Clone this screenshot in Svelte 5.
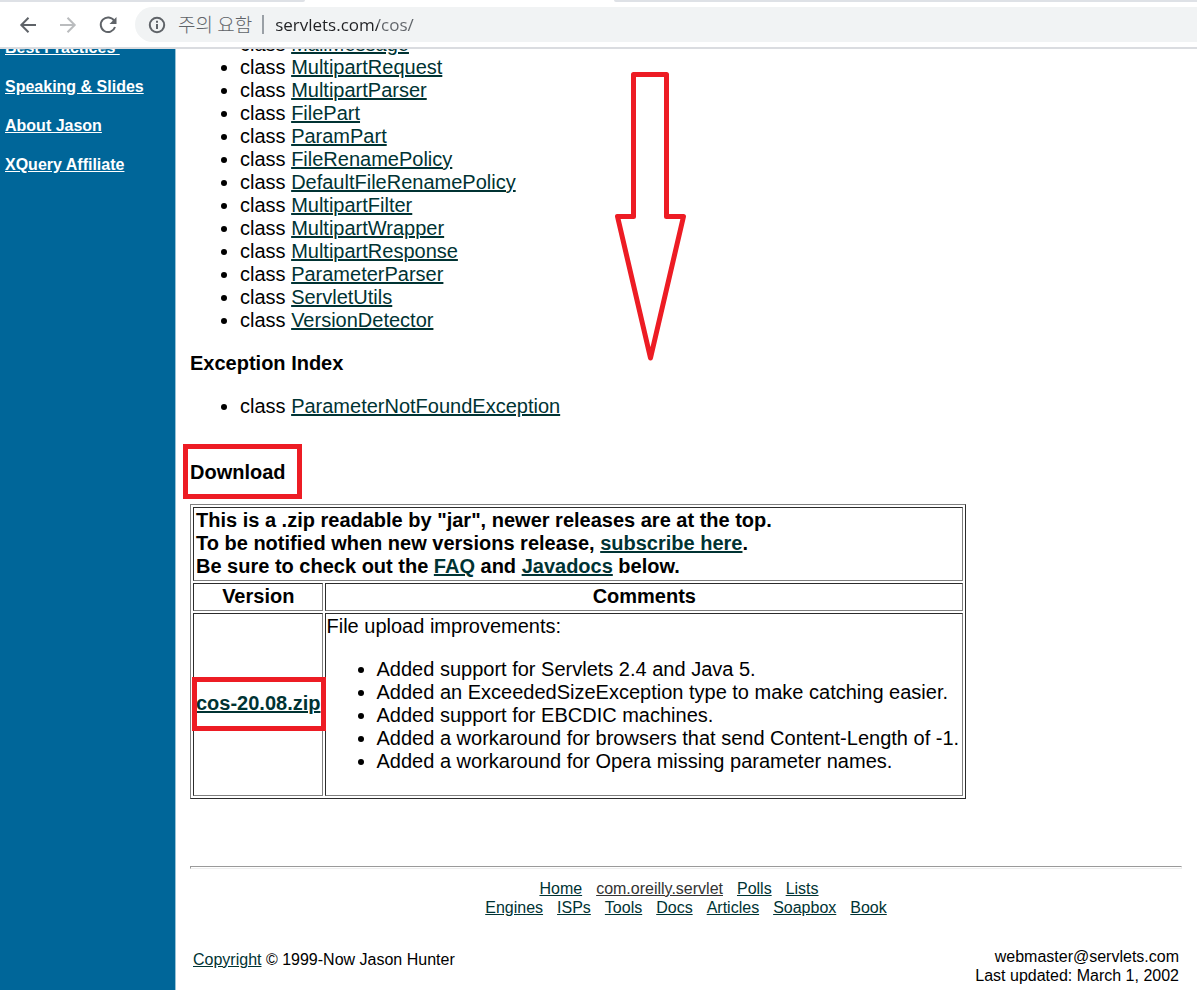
<script>
  const classes = [
    'MailMessage', 'MultipartRequest', 'MultipartParser', 'FilePart', 'ParamPart',
    'FileRenamePolicy', 'DefaultFileRenamePolicy', 'MultipartFilter', 'MultipartWrapper',
    'MultipartResponse', 'ParameterParser', 'ServletUtils', 'VersionDetector'
  ];
  const sections = ['Best Practices\u00a0', 'Speaking & Slides', 'About Jason', 'XQuery Affiliate'];
  const improvements = [
    'Added support for Servlets 2.4 and Java 5.',
    'Added an ExceededSizeException type to make catching easier.',
    'Added support for EBCDIC machines.',
    'Added a workaround for browsers that send Content-Length of -1.',
    'Added a workaround for Opera missing parameter names.'
  ];
  const footerRows = [
    ['Home', 'com.oreilly.servlet', 'Polls', 'Lists'],
    ['Engines', 'ISPs', 'Tools', 'Docs', 'Articles', 'Soapbox', 'Book']
  ];
  let address = $state('servlets.com/cos/');
</script>

<div class="window">
  <header>
    <div class="tabs"><span class="tab before"></span><span class="tab active"></span><span class="tab after"></span></div>
    <div class="toolbar">
      <button aria-label="Back">
        <svg width="18" height="18" viewBox="0 0 18 18"><path d="M17 9H2.500M9.500 1.800L2.300 9l7.200 7.200" /></svg>
      </button>
      <button aria-label="Forward" disabled>
        <svg width="18" height="18" viewBox="0 0 18 18"><path d="M1 9h14.500M8.500 1.800L15.700 9l-7.200 7.200" /></svg>
      </button>
      <button aria-label="Reload">
        <svg width="18" height="18" viewBox="0 0 18 18"><path d="M15.200 4.800A7.300 7.300 0 1 0 16 11" /><path class="solid" d="M17.500 1v7h-7z" /></svg>
      </button>
      <div class="omnibox">
        <svg width="18" height="18" viewBox="0 0 18 18"><circle cx="9" cy="9" r="7.200" /><path d="M9 8v5M9 4.800v2" /></svg>
        <label for="address">주의 요함</label>
        <span class="divider"></span>
        <input id="address" type="text" spellcheck="false" bind:value={address} />
      </div>
    </div>
  </header>

  <div class="page">
    <nav class="side">
      {#each sections as name}
        <a href="#top">{name}</a>
      {/each}
    </nav>

    <main>
      <ul class="index">
        {#each classes as name}
          <li>class <a href="#top">{name}</a></li>
        {/each}
      </ul>

      <h3>Exception Index</h3>
      <ul>
        <li>class <a href="#top">ParameterNotFoundException</a></li>
      </ul>

      <h3 class="download"><span class="marked">Download</span></h3>

      <table>
        <tbody>
          <tr>
            <th colspan="2" class="intro">
              This is a .zip readable by "jar", newer releases are at the top.<br />
              To be notified when new versions release, <a href="#top">subscribe here</a>.<br />
              Be sure to check out the <a href="#top">FAQ</a> and <a href="#top">Javadocs</a> below.
            </th>
          </tr>
          <tr><th>Version</th><th>Comments</th></tr>
          <tr>
            <th class="file"><span class="marked zip"><a href="#top">cos-20.08.zip</a></span></th>
            <td>
              File upload improvements:
              <ul>
                {#each improvements as text}
                  <li>{text}</li>
                {/each}
              </ul>
            </td>
          </tr>
        </tbody>
      </table>

      <footer>
        <hr />
        <nav class="links">
          {#each footerRows as row}
            <div>
              {#each row as name}<a href="#top" class:visited={name === 'com.oreilly.servlet'}>{name}</a>{/each}
            </div>
          {/each}
        </nav>
        <div class="legal">
          <p class="copyright"><a href="#top">Copyright</a> © 1999-Now Jason Hunter</p>
          <p class="contact">webmaster@servlets.com<br />Last updated: March 1, 2002</p>
        </div>
      </footer>
    </main>

    <svg class="arrow" width="72" height="292" viewBox="0 0 72 292" aria-hidden="true">
      <path d="M18.500 2.500H51.500V144.500H68.500L35.500 286L2.500 144.500H18.500Z" />
    </svg>
  </div>
</div>

<style>
  :global(body) { margin: 0; background: #fff; }
  .window {
    display: flex;
    flex-direction: column;
    height: 100vh;
    overflow: hidden;
    font: 20px/23px "Liberation Sans", Arial, sans-serif;
    color: #000;
  }
  header { flex: none; background: #fff; border-bottom: 2px solid #dadce0; }
  .tabs { display: flex; height: 2px; background: #fff; }
  .tab { background: #dee1e6; }
  .before { flex: 0 0 305px; border-bottom-right-radius: 2px; }
  .active { flex: 0 0 309px; background: #fff; }
  .after { flex: 1; border-bottom-left-radius: 2px; }
  .toolbar { display: flex; align-items: center; height: 45px; padding-left: 19px; }
  button { width: 18px; height: 18px; margin-right: 22px; padding: 0; border: 0; background: none; display: flex; color: #5f6368; }
  button:disabled { color: #babcbe; }
  button svg path, .omnibox svg { fill: none; stroke: currentColor; stroke-width: 2; }
  button svg path.solid { fill: currentColor; stroke: none; }
  .omnibox {
    flex: 1;
    display: flex;
    align-items: center;
    height: 35px;
    margin-left: -4px;
    padding-left: 13px;
    border-radius: 18px 0 0 18px;
    background: #f1f3f4;
    color: #5f6368;
  }
  .omnibox label {
    margin-left: 12px;
    padding-bottom: 3px;
    font-family: "Noto Sans CJK KR", sans-serif;
    font-size: 19px;
    font-weight: 300;
    white-space: nowrap;
  }
  .divider { width: 2px; height: 19px; margin: 0 11px 0 10px; background: #9aa0a6; }
  input {
    flex: 1;
    min-width: 0;
    padding: 0;
    border: 0;
    outline: 0;
    font: 17px/24px "Open Sans", sans-serif;
    color: transparent;
    background: linear-gradient(90deg, #202124 103px, #5f6368 103px);
    -webkit-background-clip: text;
    background-clip: text;
  }
  .page { position: relative; flex: 1; min-height: 0; display: flex; overflow: hidden; }
  .side {
    flex: none;
    display: flex;
    flex-direction: column;
    align-items: flex-start;
    gap: 20px;
    width: 170px;
    padding-left: 5px;
    border-right: 1px solid #99c2d6;
    background: #069;
    font: bold 16px/19px "Liberation Sans", Arial, sans-serif;
  }
  .side a { color: #fff; }
  .side a:first-child { margin-top: -11px; }
  a { color: #033; }
  main { flex: 1; min-width: 0; padding: 0 15px 0 14px; }
  ul { margin: 20px 0; padding-left: 50px; }
  .index { margin-top: -16px; }
  h3 { margin: 20px 0; font-size: 20px; line-height: 23px; }
  .download { margin-top: 43px; }
  .marked { position: relative; }
  .marked::after { content: ""; position: absolute; inset: -17px -16px -16px -7px; border: 5px solid #ed1c24; }
  .zip::after { inset: -15px -5px -17px -4px; }
  table { border: 1px solid; border-color: #808080 #2c2c2c #2c2c2c #808080; border-spacing: 2px; line-height: 23px; }
  th, td { padding: 1px 1px 2px 2px; border: 1px solid; border-color: #2c2c2c #808080 #808080 #2c2c2c; }
  .intro { text-align: left; }
  .file { padding-bottom: 4px; }
  td { padding: 1px 3px 2px 1px; }
  footer { margin-top: 67px; font-size: 16px; line-height: 19px; }
  hr { height: 1px; margin: 0; border: 1px solid; border-color: #9a9a9a #eee #eee #9a9a9a; }
  .links { margin-top: 10px; }
  .links div { display: flex; justify-content: center; gap: 14px; }
  .links div:first-child { padding-right: 14px; }
  .visited { color: #333; }
  .legal { display: flex; justify-content: space-between; margin-top: 30px; padding: 0 3px; }
  p { margin: 0; }
  .copyright { padding-top: 3px; }
  .contact { text-align: right; }
  .arrow { position: absolute; left: 615px; top: 23px; }
  .arrow path { fill: none; stroke: #ed1c24; stroke-width: 5; stroke-linejoin: round; }
</style>
